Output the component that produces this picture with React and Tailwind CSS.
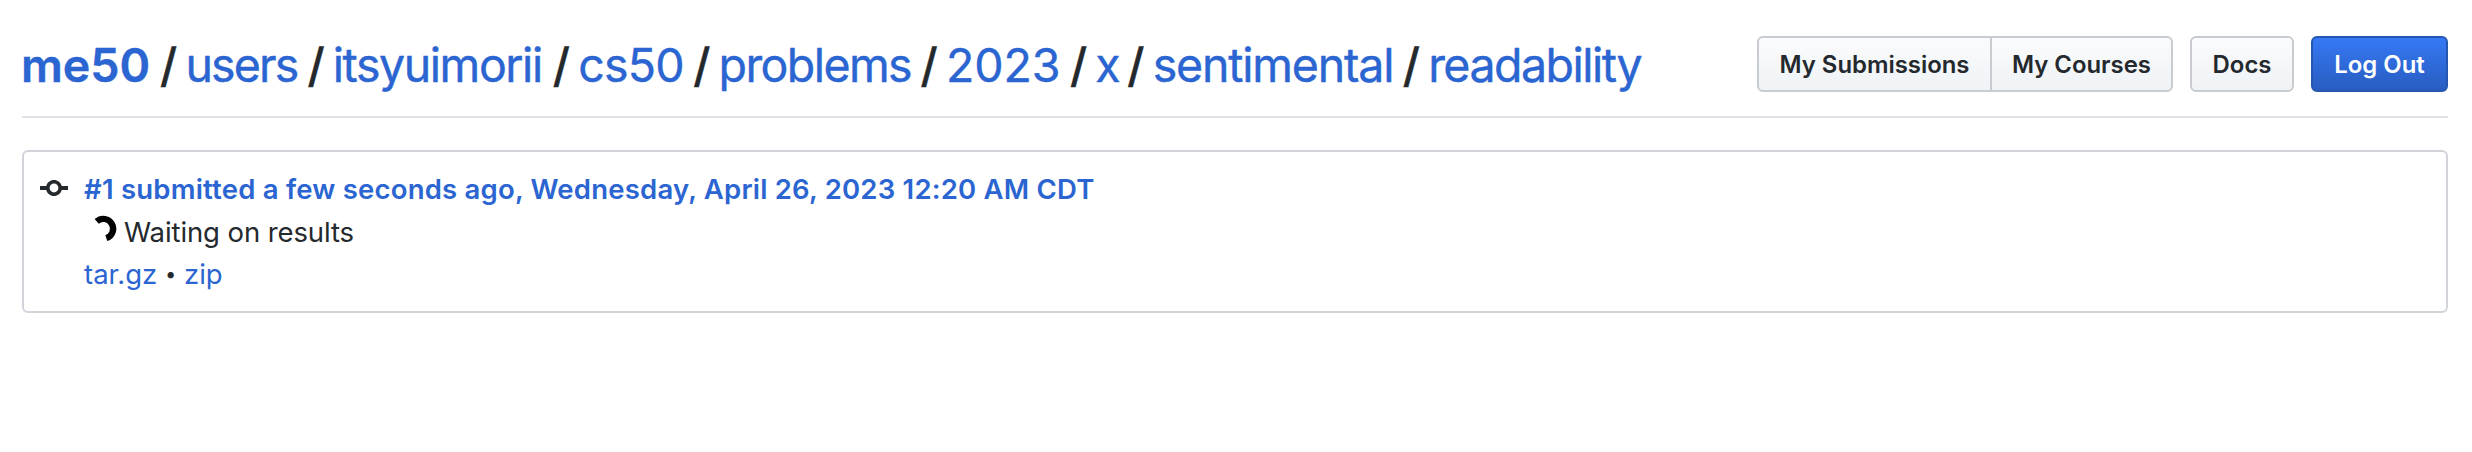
const crumbs = [
  { name: "users", width: "w-[122px]", tracking: "tracking-[-1.85px]" },
  { name: "itsyuimorii", width: "w-[220px]", tracking: "tracking-[-1.44px]" },
  { name: "cs50", width: "w-[115px]", tracking: "tracking-[-0.8px]" },
  { name: "problems", width: "w-[202px]", tracking: "tracking-[-1.6px]" },
  { name: "2023", width: "w-[124px]", tracking: "tracking-[-0.1px]" },
  { name: "x", width: "w-[32px]", tracking: "tracking-normal" },
  { name: "sentimental", width: "w-[250px]", tracking: "tracking-[-1.2px]" },
  { name: "readability", width: "w-[214px]", tracking: "tracking-[-1.5px]" },
];

const buttonBase =
  "flex h-14 items-center justify-center border-2 pt-0.5 text-[23.9px] font-semibold whitespace-nowrap";
const grayButton =
  "border-[#c8cbcf] bg-linear-to-b from-[#fafbfc] to-[#eff3f6] text-[#24292e]";

function CommitIcon() {
  return (
    <svg viewBox="0 0 14 16" className="mt-1 ml-4 h-8 w-7 shrink-0 fill-[#24292e]">
      <path
        fillRule="evenodd"
        d="M10.86 7c-.45-1.72-2-3-3.86-3-1.86 0-3.41 1.28-3.86 3H0v2h3.14c.45 1.72 2 3 3.86 3 1.86 0 3.41-1.28 3.86-3H14V7h-3.14zM7 10.2c-1.22 0-2.2-.98-2.2-2.2 0-1.22.98-2.2 2.2-2.2 1.22 0 2.2.98 2.2 2.2 0 1.22-.98 2.2-2.2 2.2z"
      />
    </svg>
  );
}

function Spinner() {
  return (
    <svg viewBox="0 0 32 32" className="ml-[3px] h-8 w-8 shrink-0" fill="none">
      <path d="M9.7 11.4A9.85 9.85 0 1 1 19.3 28.1" stroke="#000" strokeWidth="6.3" />
    </svg>
  );
}

export default function App() {
  return (
    <div className="h-[452px] w-[2472px] bg-white pl-[22px] pr-6 font-[Inter,sans-serif] text-[#24292e]">
      <header className="flex h-[118px] items-start justify-between border-b-2 border-[#e1e4e8] pt-9">
        <h1 className="flex h-[60px] items-center text-[46.5px] whitespace-nowrap [-webkit-text-stroke:0.4px]">
          <a className="-ml-px w-[139px] font-semibold text-[#2b65d1]">me50</a>
          {crumbs.map((crumb) => (
            <span key={crumb.name} className="flex">
              <span className="w-[25.4px] font-medium">/</span>
              <a className={`${crumb.width} ${crumb.tracking} text-[#2b65d1]`}>{crumb.name}</a>
            </span>
          ))}
        </h1>
        <nav className="flex">
          <a className={`${buttonBase} ${grayButton} w-[235px] rounded-l-md`}>My Submissions</a>
          <a className={`${buttonBase} ${grayButton} -ml-0.5 w-[183px] rounded-r-md`}>My Courses</a>
          <a className={`${buttonBase} ${grayButton} ml-[17px] w-[104px] rounded-md`}>Docs</a>
          <a
            className={`${buttonBase} ml-[17px] w-[137px] rounded-md border-[#2557b0] bg-linear-to-b from-[#3678f5] to-[#285dc0] text-white`}
          >
            Log Out
          </a>
        </nav>
      </header>

      <section className="mt-8 flex h-[163px] rounded-md border-2 border-[#d1d5da] pt-4 text-[27.5px] leading-[42px] whitespace-nowrap">
        <CommitIcon />
        <div className="ml-4">
          <div className="font-semibold tracking-[0.215px] text-[#2b65d1]">
            #1 submitted a few seconds ago, Wednesday, April 26, 2023 12:20 AM CDT
          </div>
          <div className="flex items-start">
            <Spinner />
            <span className="ml-[5px] pt-px tracking-[-0.1px]">Waiting on results</span>
          </div>
          <div className="flex">
            <a className="w-[81px] text-[#2b65d1]">tar.gz</a>
            <span className="w-[19px] text-[20px]">•</span>
            <a className="text-[#2b65d1]">zip</a>
          </div>
        </div>
      </section>
    </div>
  );
}
